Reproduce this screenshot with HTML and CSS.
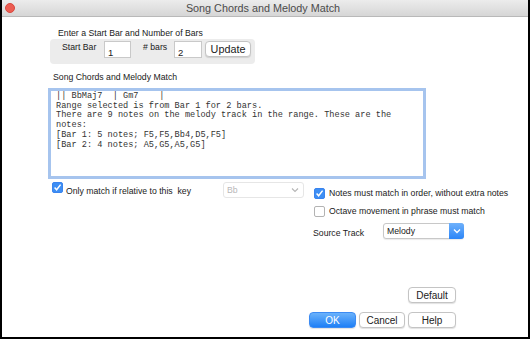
FILE: index.html
```html
<!DOCTYPE html>
<html lang="en">
<head>
    <meta charset="UTF-8">
    <title>Song Chords and Melody Match</title>
    <link rel="stylesheet" href="styles.css">
</head>
<body>
    <div class="window">
        <div class="titlebar">
            <span class="close"></span>
            <span class="title">Song Chords and Melody Match</span>
            <span></span>
        </div>

        <div class="range">
            <p class="range-caption">Enter a Start Bar and Number of Bars</p>
            <div class="range-box">
                <label class="lbl-start" for="startBar">Start Bar</label>
                <input class="num num-start" id="startBar" type="text" value="1">
                <label class="lbl-bars" for="numBars"># bars</label>
                <input class="num num-bars" id="numBars" type="text" value="2">
                <button class="btn btn-update" type="button">Update</button>
            </div>
        </div>

        <p class="section-label">Song Chords and Melody Match</p>
        <div class="result">|| BbMaj7  | Gm7    |
Range selected is from Bar 1 for 2 bars.
There are 9 notes on the melody track in the range. These are the
notes:
[Bar 1: 5 notes; F5,F5,Bb4,D5,F5]
[Bar 2: 4 notes; A5,G5,A5,G5]</div>

        <div class="options">
            <div class="opt-left">
                <span class="box checked"></span>
                <span class="check-text key-text">Only match if relative to this&nbsp; key</span>
                <div class="select disabled">
                    <span>Bb</span>
                    <svg class="chev" width="8" height="6" viewBox="0 0 8 6"><path d="M1 1.5 L4 4.5 L7 1.5" fill="none" stroke="#b5b5b5" stroke-width="1.1"/></svg>
                </div>
            </div>
            <div class="opt-right">
                <div class="check-row">
                    <span class="box checked"></span>
                    <span class="check-text">Notes must match in order, without extra notes</span>
                </div>
                <div class="check-row">
                    <span class="box"></span>
                    <span class="check-text">Octave movement in phrase must match</span>
                </div>
                <div class="track-row">
                    <span class="track-label">Source Track</span>
                    <div class="select">
                        <span>Melody</span>
                        <span class="select-btn">
                            <svg width="8" height="6" viewBox="0 0 8 6"><path d="M1 1.5 L4 4.5 L7 1.5" fill="none" stroke="#fff" stroke-width="1.3"/></svg>
                        </span>
                    </div>
                </div>
            </div>
        </div>

        <div class="actions">
            <button class="btn btn-wide" type="button">Default</button>
            <div class="action-row">
                <button class="btn btn-ok" type="button">OK</button>
                <button class="btn btn-cancel" type="button">Cancel</button>
                <button class="btn btn-wide" type="button">Help</button>
            </div>
        </div>
    </div>
</body>
</html>
```

FILE: styles.css
```css
* {
    box-sizing: border-box;
}
body {
    margin: 0;
    background: #fff;
    font-family: "Liberation Sans", Arial, sans-serif;
    font-size: 8.7px;
    color: #1a1a1a;
}
p {
    margin: 0;
}
.window {
    width: 530px;
    height: 339px;
    border: 2px solid #000;
    border-top: 0;
    background: #fff;
    overflow: hidden;
}
.titlebar {
    height: 17px;
    display: grid;
    grid-template-columns: 20px 1fr 20px;
    align-items: center;
    background: linear-gradient(#ececec, #d6d6d6);
    border-bottom: 1px solid #b9b9b9;
}
.close {
    width: 10px;
    height: 10px;
    margin-left: 3px;
    border-radius: 50%;
    background: #ec5d52;
    border: 1px solid #d8483e;
}
.title {
    text-align: center;
    font-size: 10.8px;
    color: #4b4b4b;
    padding-right: 4px;
}
.range {
    margin: 10px 0 0 48px;
}
.range-caption {
    margin-left: 8px;
    line-height: 12px;
}
.range-box {
    width: 205px;
    height: 25px;
    display: flex;
    align-items: flex-start;
    padding-left: 12px;
    background: #ececec;
    border-radius: 4px;
}
.lbl-start,
.lbl-bars {
    margin-top: 2px;
    line-height: 12px;
}
.lbl-start {
    width: 42px;
}
.lbl-bars {
    width: 31px;
    margin-left: 12px;
}
.num {
    height: 17px;
    margin-top: 2px;
    padding: 5px 0 0 3px;
    border: 1px solid #c9c9c9;
    background: #fff;
    font-family: inherit;
    font-size: 9.5px;
    color: #222;
}
.num-start {
    width: 27px;
}
.num-bars {
    width: 28px;
}
.btn {
    height: 16px;
    padding: 0;
    border: 1px solid #c4c4c4;
    border-radius: 4px;
    background: #fff;
    box-shadow: 0 1px 1px rgba(0, 0, 0, 0.12);
    font-family: inherit;
    font-size: 10px;
    color: #222;
}
.btn-update {
    width: 46px;
    height: 16px;
    margin: 2px 0 0 3px;
    font-size: 10.8px;
}
.section-label {
    margin: 7px 0 0 51px;
    line-height: 12px;
}
.result {
    width: 378px;
    height: 91px;
    margin: 5px 0 0 46px;
    padding: 1px 0 0 5px;
    border: 3px solid #a6c4ee;
    font-family: "Liberation Mono", "Courier New", monospace;
    font-size: 8.6px;
    line-height: 9.7px;
    white-space: pre;
    color: #333;
}
.options {
    display: flex;
    margin-top: 3px;
}
.opt-left {
    display: flex;
    align-items: flex-start;
    margin-left: 50px;
}
.box {
    flex: none;
    width: 11px;
    height: 11px;
    border: 1px solid #b3b3b3;
    border-radius: 2px;
    background: #fff;
}
.box.checked {
    border-color: #3a84ee;
    background: #3d8ef4 url("data:image/svg+xml,%3Csvg xmlns='http://www.w3.org/2000/svg' width='9' height='9' viewBox='0 0 9 9'%3E%3Cpath d='M1.6 4.6 L3.6 6.8 L7.6 1.6' fill='none' stroke='%23fff' stroke-width='1.5'/%3E%3C/svg%3E") center no-repeat;
}
.check-text {
    margin-left: 4px;
    line-height: 12px;
}
.key-text {
    width: 157px;
    margin-left: 3px;
    margin-top: 3px;
}
.select {
    width: 81px;
    height: 16px;
    display: flex;
    align-items: center;
    justify-content: space-between;
    padding-left: 3px;
    border: 1px solid #c8c8c8;
    border-radius: 3px;
    background: #fff;
    box-shadow: 0 1px 1px rgba(0, 0, 0, 0.08);
}
.select.disabled {
    border-color: #e6e6e6;
    box-shadow: none;
    color: #b8b8b8;
    padding-right: 4px;
}
.opt-right {
    display: flex;
    flex-direction: column;
    margin-left: 10px;
    padding-top: 5px;
}
.check-row {
    display: flex;
    align-items: center;
    height: 12px;
    margin-bottom: 6px;
}
.track-row {
    display: flex;
    align-items: center;
    margin-left: -1px;
}
.track-label {
    width: 70px;
    padding-top: 3px;
}
.select-btn {
    width: 15px;
    height: 16px;
    margin: -1px -1px -1px 0;
    display: flex;
    align-items: center;
    justify-content: center;
    border-radius: 0 3px 3px 0;
    background: linear-gradient(#6fb1fb, #2c86f8);
}
.actions {
    display: flex;
    flex-direction: column;
    align-items: flex-end;
    margin: 48px 72px 0 0;
}
.action-row {
    display: flex;
    gap: 3px;
    margin-top: 9px;
}
.btn-wide {
    width: 48px;
}
.btn-cancel {
    width: 46px;
}
.btn-ok {
    width: 47px;
    border-color: #3c8bf3;
    background: linear-gradient(#6bb2fb, #1e7ff6);
    color: #fff;
}
```
